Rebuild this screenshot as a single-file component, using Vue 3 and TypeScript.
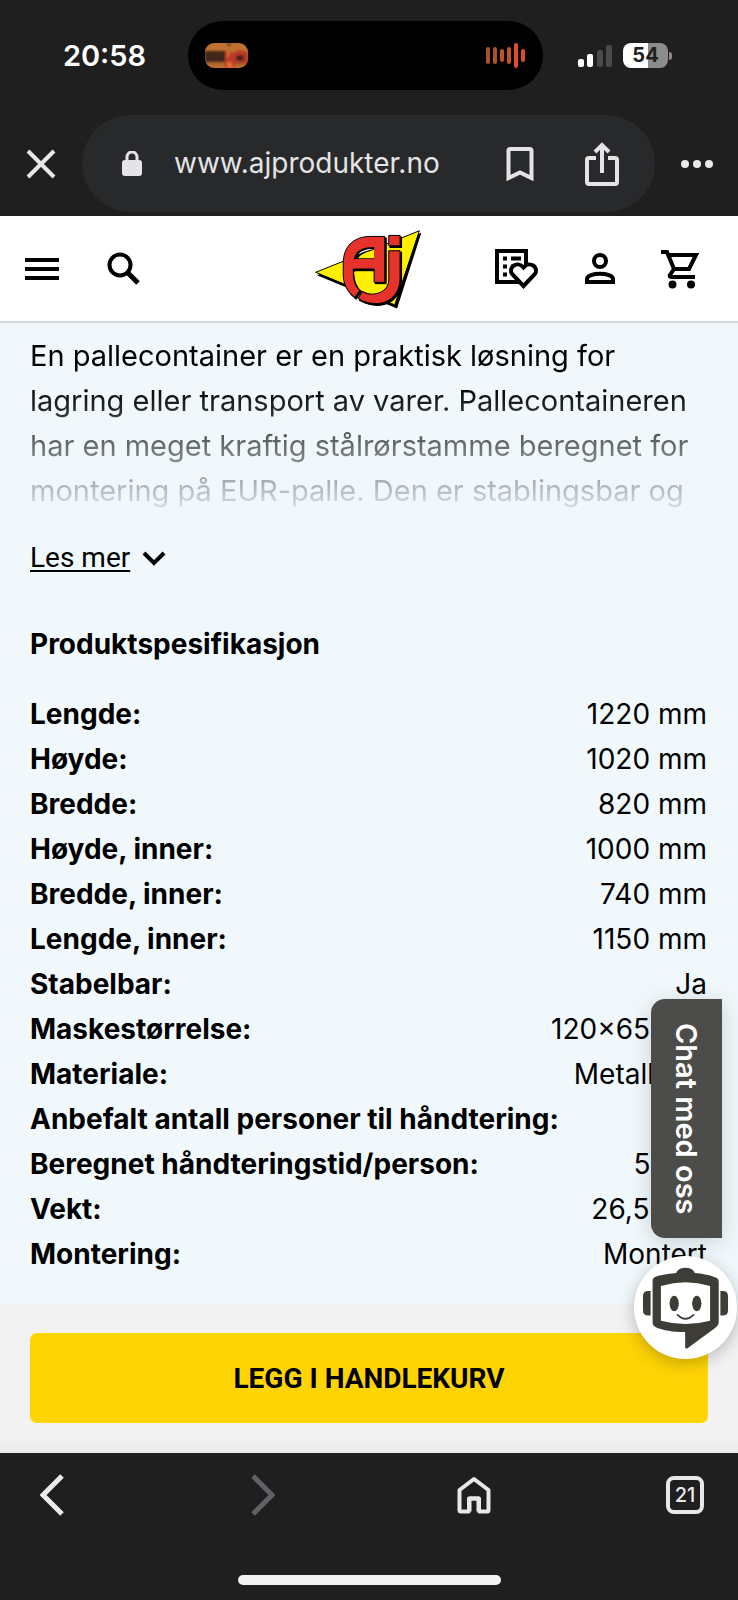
<script setup lang="ts">
interface Spec {
  label: string
  value: string
}

const specs: Spec[] = [
  { label: 'Lengde:', value: '1220 mm' },
  { label: 'Høyde:', value: '1020 mm' },
  { label: 'Bredde:', value: '820 mm' },
  { label: 'Høyde, inner:', value: '1000 mm' },
  { label: 'Bredde, inner:', value: '740 mm' },
  { label: 'Lengde, inner:', value: '1150 mm' },
  { label: 'Stabelbar:', value: 'Ja' },
  { label: 'Maskestørrelse:', value: '120×65 mm' },
  { label: 'Materiale:', value: 'Metalltråd' },
  { label: 'Anbefalt antall personer til håndtering:', value: '1' },
  { label: 'Beregnet håndteringstid/person:', value: '5 Min' },
  { label: 'Vekt:', value: '26,50 kg' },
  { label: 'Montering:', value: 'Montert' },
]
</script>

<template>
  <div class="screen">
    <div class="status">
      <div class="clock">20:58</div>
      <div class="island">
        <svg class="cover" width="43" height="25" viewBox="0 0 43 25" aria-hidden="true">
          <defs>
            <clipPath id="cover-clip"><rect width="43" height="25" rx="9" /></clipPath>
            <filter id="cover-soft"><feGaussianBlur stdDeviation="0.8" /></filter>
          </defs>
          <g clip-path="url(#cover-clip)">
            <rect width="43" height="25" fill="#c0702f" />
            <g filter="url(#cover-soft)">
              <path d="M0 8h21v11H0z" fill="#43251f" />
              <path d="M20 8l8 2 6-3 9 2v11l-12 1-6 6-5-3z" fill="#b63a27" />
              <ellipse cx="35" cy="15" rx="4" ry="3" fill="#4f1c1c" />
              <path d="M22 8l3 2-3 6zM22 19h5v6h-5z" fill="#ee6b2b" />
              <path d="M22 0h4v3h-4z" fill="#6d4a36" />
              <path d="M2 21h18M29 21h11" stroke="#8c5129" stroke-width="2" stroke-dasharray="2 2" />
            </g>
          </g>
        </svg>
        <svg width="40" height="27" viewBox="0 0 40 27" stroke-linecap="round" stroke-width="4" aria-hidden="true">
          <path d="M2 7v13M9 7v13" stroke="#a9532d" />
          <path d="M16 9v9M23 7v13" stroke="#c4512b" />
          <path d="M30 3v21M37 9v9" stroke="#dc4f29" />
        </svg>
      </div>
      <div class="signals">
        <svg width="35" height="24" viewBox="0 0 35 24" aria-hidden="true">
          <rect x="0" y="15" width="6" height="8" rx="2" fill="#fff" />
          <rect x="9" y="10" width="6" height="13" rx="2" fill="#fff" />
          <rect x="19" y="6" width="6" height="17" rx="2" fill="#4b4b4b" />
          <rect x="28" y="1" width="6" height="22" rx="2" fill="#4b4b4b" />
        </svg>
        <div class="battery"><span>54</span></div>
      </div>
    </div>

    <div class="browser">
      <button class="plain" type="button" aria-label="Lukk">
        <svg width="30" height="30" viewBox="0 0 30 30" fill="none" stroke="#e8e8ea" stroke-width="4">
          <path d="M2 2l26 26M28 2L2 28" />
        </svg>
      </button>
      <div class="address">
        <svg width="20" height="26" viewBox="0 0 20 26" aria-hidden="true">
          <rect y="9" width="20" height="16" rx="3" fill="#e4e4e6" />
          <path d="M5 10V6a5 5 0 0 1 10 0v4" fill="none" stroke="#e4e4e6" stroke-width="3" />
        </svg>
        <span class="url">www.ajprodukter.no</span>
        <button class="plain" type="button" aria-label="Bokmerke">
          <svg width="28" height="36" viewBox="0 0 28 36" fill="none" stroke="#e4e4e6" stroke-width="4">
            <path d="M2.500 32V5q0-2 2-2h19q2 0 2 2v27l-11.500-5.500z" />
          </svg>
        </button>
        <button class="plain" type="button" aria-label="Del">
          <svg width="34" height="44" viewBox="0 0 34 44" fill="none" stroke="#e4e4e6" stroke-width="4">
            <path d="M11 16H4q-2 0-2 2v22q0 2 2 2h26q2 0 2-2V18q0-2-2-2h-7M17 31V3M10 10l7-7 7 7" />
          </svg>
        </button>
      </div>
      <button class="plain" type="button" aria-label="Mer">
        <svg width="32" height="8" viewBox="0 0 32 8" fill="#e8e8ea">
          <circle cx="4" cy="4" r="4" /><circle cx="16" cy="4" r="4" /><circle cx="28" cy="4" r="4" />
        </svg>
      </button>
    </div>

    <div class="page">
      <header class="header">
        <div class="tools start">
          <button class="plain" type="button" aria-label="Meny">
            <svg width="34" height="24" viewBox="0 0 34 24" fill="none" stroke="#000" stroke-width="4">
              <path d="M0 3h34M0 12h34M0 21h34" />
            </svg>
          </button>
          <button class="plain" type="button" aria-label="Søk">
            <svg width="34" height="34" viewBox="0 0 34 34" fill="none" stroke="#000">
              <circle cx="13" cy="13" r="10.500" stroke-width="4" />
              <path d="M20.500 20.500L31 31" stroke-width="5" />
            </svg>
          </button>
        </div>
        <a class="logo" href="#" aria-label="AJ Produkter">
          <svg width="108" height="82" viewBox="45 35 325 246">
            <path d="M54 177L368 49 295 277z" fill="#000" />
            <path d="M50 168L362 43 288 266z" fill="#ffef00" stroke="#000" stroke-width="3" />
            <g fill="#000" stroke="#000" stroke-width="4" transform="translate(4 5)">
              <path d="M258 60H215C160 60 133 95 133 140v35c0 30 14 53 35 68l15-21c-12-10-20-24-20-64h63v40h32z" />
              <path d="M270 103h34v82c0 50-34 77-72 77-22 0-37-5-54-15l12-21c10 6 22 9 38 7 27-4 42-21 42-43z" />
              <path d="M270 57h34v31h-34z" />
            </g>
            <path d="M166 166h53v38h45v-14c0 22-10 34-36 38-16 2-30-2-42-10-15-12-20-30-20-52z" fill="#ffef00" />
            <g fill="#e5322b" stroke="#000" stroke-width="3">
              <path d="M258 60H215C160 60 133 95 133 140v35c0 30 14 53 35 68l15-21c-12-10-20-24-20-64h63v40h32z" />
              <path d="M270 103h34v82c0 50-34 77-72 77-22 0-37-5-54-15l12-21c10 6 22 9 38 7 27-4 42-21 42-43z" />
              <path d="M270 57h34v31h-34z" />
            </g>
            <path d="M165 128c5-24 24-36 61-36v36z" fill="#000" />
            <path d="M177 126c8-12 24-19 49-26v26z" fill="#ffef00" />
            <path d="M177 114c10-11 28-17 47-16-16 4-32 9-47 16z" fill="#fff" />
          </svg>
        </a>
        <div class="tools end">
          <button class="plain" type="button" aria-label="Ønskeliste">
            <svg width="44" height="40" viewBox="0 0 44 40" fill="none" stroke="#000" stroke-width="4">
              <path d="M2 2h29v31H2z" />
              <path d="M8 9.500h4M8 17.500h4M8 25.500h4M16 9.500h10M16 17.500h4" />
              <path d="M28.500 37L17.500 25.500C12 19 22 11 28.500 18.500 35 11 45 19 39.500 25.500z" fill="#fff" />
            </svg>
          </button>
          <button class="plain" type="button" aria-label="Konto">
            <svg width="30" height="32" viewBox="0 0 30 32" fill="none" stroke="#000" stroke-width="4">
              <circle cx="15" cy="8" r="6" />
              <path d="M2 29v-3c0-7 26-7 26 0v3z" />
            </svg>
          </button>
          <button class="plain" type="button" aria-label="Handlekurv">
            <svg width="38" height="40" viewBox="0 0 38 40" fill="none" stroke="#000" stroke-width="4">
              <path d="M0 3h6l7 17h15l7-14H8M13 20l-4 6q-1 2 2 2h23" />
              <circle cx="11.500" cy="35.500" r="4" fill="#000" stroke="none" />
              <circle cx="30" cy="35.500" r="4" fill="#000" stroke="none" />
            </svg>
          </button>
        </div>
      </header>

      <main class="content">
        <p class="description">
          En pallecontainer er en praktisk løsning for<br />
          lagring eller transport av varer. Pallecontaineren<br />
          har en meget kraftig stålrørstamme beregnet for<br />
          montering på EUR-palle. Den er stablingsbar og
        </p>
        <button class="plain more" type="button">
          <span>Les mer</span>
          <svg width="24" height="16" viewBox="0 0 24 16" fill="none" stroke="#000" stroke-width="4">
            <path d="M2 3l10 10L22 3" />
          </svg>
        </button>
        <h2>Produktspesifikasjon</h2>
        <table>
          <tbody>
            <tr v-for="spec in specs" :key="spec.label">
              <th scope="row">{{ spec.label }}</th>
              <td>{{ spec.value }}</td>
            </tr>
          </tbody>
        </table>
      </main>

      <div class="purchase">
        <button class="buy" type="button">LEGG I HANDLEKURV</button>
      </div>

      <div class="chat">
        <button class="chat-tab" type="button">Chat med oss</button>
        <button class="plain bot" type="button" aria-label="Åpne chat">
          <svg width="103" height="103" viewBox="223 829 310 310">
            <g fill="#3d3c37">
              <path d="M273 934v74h-7q-16 0-16-16v-42q0-16 16-16zM483 934v74h7q16 0 16-16v-42q0-16-16-16z" />
              <path d="M279 908c0-14 6-16 21-20q25-6 50-8c5-12 15-16 28-16s23 4 28 16q34 3 59 12c10 3 13 7 13 16v120c0 9-5 13-13 19l-80 59c-4 4-8 2-8-3v-45c-37 0-67-6-87-14-9-4-11-8-11-16z" />
            </g>
            <path d="M304 919q74-22 148 0v105q-74 20-148 0z" fill="#fff" />
            <g fill="#3d3c37">
              <ellipse cx="344" cy="972" rx="14" ry="23" />
              <ellipse cx="412" cy="972" rx="14" ry="23" />
            </g>
            <path d="M354 1006q24 24 48 0" fill="none" stroke="#3d3c37" stroke-width="5" stroke-linecap="round" />
          </svg>
        </button>
      </div>
    </div>

    <nav class="bottom">
      <div class="nav-row">
        <button class="plain" type="button" aria-label="Tilbake">
          <svg width="24" height="42" viewBox="0 0 24 42" fill="none" stroke="#ececee" stroke-width="5">
            <path d="M22 2L3 21l19 19" />
          </svg>
        </button>
        <button class="plain" type="button" aria-label="Fremover" disabled>
          <svg width="24" height="42" viewBox="0 0 24 42" fill="none" stroke="#606166" stroke-width="5">
            <path d="M2 2l19 19L2 40" />
          </svg>
        </button>
        <button class="plain" type="button" aria-label="Hjem">
          <svg width="34" height="38" viewBox="0 0 34 38" fill="none" stroke="#e8e8ea" stroke-width="4" stroke-linejoin="round">
            <path d="M12 35.500H4q-1.500 0-1.500-1.500V14L17 3l14.500 11v20q0 1.500-1.500 1.500h-8V22.500H12z" />
            <path d="M13.500 36h7" stroke="#1f1f1f" stroke-width="6" />
            <path d="M12.500 35.500v-13h9v13" />
          </svg>
        </button>
        <button class="plain" type="button" aria-label="Faner, 21 åpne">
          <span class="tabs">21</span>
        </button>
      </div>
      <div class="indicator"></div>
    </nav>
  </div>
</template>

<style>
body {
  margin: 0;
  background: #1f1f1f;
}
</style>

<style scoped>
.screen {
  display: flex;
  flex-direction: column;
  min-height: 100vh;
  background: #1f1f1f;
  color: #000;
  font-family: Roboto, "Liberation Sans", sans-serif;
  font-size: 28px;
  line-height: 45px;
}

.plain {
  display: flex;
  align-items: center;
  justify-content: center;
  padding: 0;
  border: 0;
  background: none;
  color: inherit;
  font: inherit;
}

svg {
  display: block;
  flex: none;
}

.status {
  display: grid;
  grid-template-columns: 188fr 355px 195fr;
  align-items: center;
  height: 69px;
  padding: 21px 0 25px;
  color: #fff;
  font-family: Inter, "Liberation Sans", sans-serif;
}

.clock {
  padding-left: 21px;
  font-size: 29px;
  font-weight: 600;
  text-align: center;
}

.island {
  display: flex;
  align-items: center;
  justify-content: space-between;
  height: 69px;
  padding: 0 17px;
  box-sizing: border-box;
  border-radius: 35px;
  background: #000;
}

.signals {
  display: flex;
  align-items: center;
  justify-content: center;
  gap: 10px;
  padding-right: 35px;
}

.battery {
  position: relative;
  width: 45px;
  height: 25px;
  border-radius: 8px;
  background: linear-gradient(90deg, #fff 55%, #8c8c8c 55%);
  color: #1f1f1f;
  font-size: 20px;
  font-weight: 700;
  line-height: 25px;
  text-align: center;
}

.battery::after {
  content: "";
  position: absolute;
  top: 9px;
  right: -4px;
  width: 3px;
  height: 8px;
  border-radius: 0 3px 3px 0;
  background: #8c8c8c;
}

.browser {
  display: grid;
  grid-template-columns: 82px 1fr 83px;
  height: 97px;
  padding-bottom: 4px;
}

.address {
  display: flex;
  align-items: center;
  padding: 0 36px 0 40px;
  border-radius: 49px;
  background: #28292b;
}

.url {
  flex: 1;
  padding-left: 32px;
  color: #e4e4e6;
  font-family: Inter, "Liberation Sans", sans-serif;
}

.address .plain + .plain {
  margin-left: 51px;
}

.page {
  position: relative;
  flex: 1;
  display: flex;
  flex-direction: column;
  background: #f0f8fc;
}

.header {
  display: grid;
  grid-template-columns: 1fr auto 1fr;
  align-items: center;
  height: 105px;
  padding: 0 39px 0 25px;
  border-bottom: 2px solid #d3d8d8;
  background: #fff;
}

.tools {
  display: flex;
  align-items: center;
}

.start {
  gap: 48px;
}

.end {
  justify-content: flex-end;
  gap: 46px;
}

.logo {
  margin-left: 12px;
}

.content {
  flex: 1;
  display: flex;
  flex-direction: column;
  align-items: stretch;
  padding: 10px 31px 27px 30px;
}

.description {
  margin: 0 0 22px;
  font-family: Inter, "Liberation Sans", sans-serif;
  font-size: 29px;
  mask-image: linear-gradient(#000 30%, transparent 105%);
}

.more {
  align-self: flex-start;
  gap: 12px;
  margin-bottom: 42px;
}

.more span {
  text-decoration: underline;
  text-decoration-thickness: 2px;
  text-underline-offset: 3px;
}

h2 {
  margin: 0 0 25px;
  font-family: Inter, "Liberation Sans", sans-serif;
  font-size: 28px;
  font-weight: 700;
}

table,
tbody {
  display: block;
  font-family: Inter, "Liberation Sans", sans-serif;
}

tr {
  display: flex;
  justify-content: space-between;
  gap: 16px;
}

th,
td {
  padding: 0;
}

th {
  font-weight: 700;
  text-align: left;
}

td {
  text-align: right;
  white-space: nowrap;
}

.purchase {
  padding: 29px 30px 30px;
  background: linear-gradient(#f2f2f2 90%, #ebebeb);
}

.buy {
  display: block;
  width: 100%;
  height: 90px;
  padding: 0;
  border: 0;
  border-radius: 7px;
  background: #fed405;
  color: #000;
  font: inherit;
  font-weight: 700;
}

.chat {
  position: absolute;
  right: 1px;
  bottom: 94px;
  display: flex;
  flex-direction: column;
  align-items: flex-end;
  gap: 18px;
}

.chat-tab {
  width: 71px;
  height: 239px;
  margin-right: 15px;
  padding: 0;
  border: 0;
  border-radius: 14px 0 0 14px;
  background: #4c4c4a;
  box-shadow: 0 4px 22px rgba(0, 0, 0, 0.16);
  color: #fff;
  font-family: Inter, "Liberation Sans", sans-serif;
  font-size: 29px;
  font-weight: 600;
  line-height: 45px;
  writing-mode: vertical-rl;
}

.bot {
  border-radius: 50%;
  background: #fff;
  box-shadow: 0 4px 16px rgba(0, 0, 0, 0.24);
}

.bottom {
  display: flex;
  flex-direction: column;
  align-items: center;
  gap: 38px;
  padding-bottom: 15px;
}

.nav-row {
  display: flex;
  align-items: center;
  justify-content: space-between;
  align-self: stretch;
  height: 84px;
  padding: 0 23px 0 22px;
}

.nav-row .plain {
  width: 60px;
  height: 60px;
}

.tabs {
  width: 30px;
  height: 30px;
  border: 4px solid #e8e8ea;
  border-radius: 8px;
  color: #e8e8ea;
  font-family: Inter, "Liberation Sans", sans-serif;
  font-size: 20px;
  font-weight: 500;
  line-height: 30px;
  text-align: center;
}

.indicator {
  width: 263px;
  height: 10px;
  border-radius: 5px;
  background: #f3f3f3;
}
</style>
